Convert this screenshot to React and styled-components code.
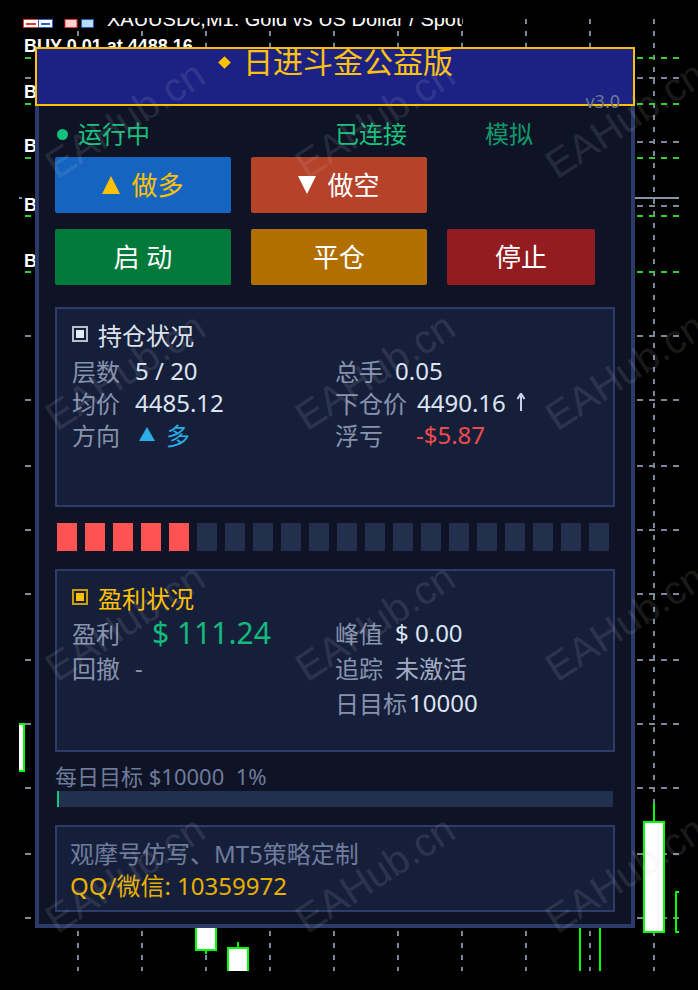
import React from "react";
import styled, { createGlobalStyle, css } from "styled-components";

const TEXT = `"Noto Sans", "Noto Sans CJK SC", sans-serif`;

const GlobalStyle = createGlobalStyle`
  html, body {
    margin: 0;
    padding: 0;
    background: #000;
  }
  body {
    font-family: ${TEXT};
  }
`;

// ---- chart underneath ----

const GRID_X = [78, 142, 206, 270, 334, 398, 462, 526, 590, 654];
const GRID_Y = [78, 142, 206, 336, 400, 466, 530, 594, 660, 724, 788, 854, 918];
const ORDERS = [
  { y: 58, top: 39, text: "BUY 0.01 at 4488.16" },
  { y: 104, top: 85, text: "BUY 0.01 at 4487.40" },
  { y: 158, top: 139, text: "BUY 0.01 at 4486.52" },
  { y: 216, top: 198, text: "BUY 0.01 at 4485.71" },
  { y: 272, top: 254, text: "BUY 0.01 at 4484.90" },
];
const CANDLES = [
  { x: 14, y: 724, w: 10, h: 47 },
  { x: 196, y: 890, w: 20, h: 60, wick: [950, 954] },
  { x: 228, y: 948, w: 20, h: 30, wick: [942, 948] },
  { x: 644, y: 822, w: 20, h: 110, wick: [803, 822] },
];
const GRID = "#7b8999";
const ORDER = "#2fcf2f";
const LIME = "#00ff00";

const ChartSvg = styled.svg`
  position: absolute;
  inset: 0;
  display: block;
`;

function Chart() {
  return (
    <ChartSvg width="698" height="990" viewBox="0 0 698 990">
      <defs>
        <clipPath id="plot">
          <rect x="19" y="18" width="679" height="953" />
        </clipPath>
      </defs>
      <rect width="698" height="990" fill="#000" />
      <g clipPath="url(#plot)">
        {GRID_X.map((x) => (
          <line key={x} x1={x} x2={x} y1="19" y2="972" stroke={GRID} strokeWidth="2" strokeDasharray="5 7" />
        ))}
        {GRID_Y.map((y) => (
          <line key={y} x1="25" x2="679" y1={y} y2={y} stroke={GRID} strokeWidth="2" strokeDasharray="6 6" />
        ))}
        {ORDERS.map((o) => (
          <line key={o.y} x1="25" x2="679" y1={o.y} y2={o.y} stroke={ORDER} strokeWidth="2" strokeDasharray="6 6" />
        ))}
        <line x1="19" x2="679" y1="198" y2="198" stroke="#8595a6" strokeWidth="2" />

        <rect x="0" y="0" width="462" height="30" fill="#000" />
        <g>
          <rect x="23.5" y="19.5" width="15" height="8" fill="#fff" stroke="#d83a3a" />
          <rect x="26" y="23" width="10" height="2" fill="#d83a3a" />
          <rect x="38.5" y="19.5" width="14" height="8" fill="#fff" stroke="#2a64c0" />
          <rect x="41" y="23" width="9" height="2" fill="#2a64c0" />
          <rect x="65" y="19.5" width="12" height="8" fill="#ffd2d2" stroke="#e03434" />
          <rect x="81.5" y="19.5" width="12" height="8" fill="#b8dcff" stroke="#1c5ea6" />
        </g>
        <text x="107" y="26" fill="#fff" fontFamily="Liberation Sans, sans-serif" fontSize="20">
          XAUUSDc,M1: Gold vs US Dollar / Spot
        </text>

        {ORDERS.map((o) => (
          <g key={o.top}>
            <rect x="22" y={o.top - 2} width="178" height="17" fill="#000" />
            <text x="24" y={o.top + 13} fill="#fff" fontFamily="Liberation Sans, sans-serif" fontSize="18" fontWeight="700">
              {o.text}
            </text>
          </g>
        ))}

        {CANDLES.map((c) => (
          <g key={c.x}>
            {c.wick && <line x1={c.x + 10} x2={c.x + 10} y1={c.wick[0]} y2={c.wick[1]} stroke={LIME} strokeWidth="2" />}
            <rect x={c.x} y={c.y} width={c.w} height={c.h} fill="#fff" stroke={LIME} strokeWidth="2" />
          </g>
        ))}
        <line x1="580" x2="580" y1="900" y2="972" stroke={LIME} strokeWidth="2" />
        <line x1="600" x2="600" y1="900" y2="972" stroke={LIME} strokeWidth="2" />
        <path d="M679 892 H676 V932 H679" fill="none" stroke={LIME} strokeWidth="2" />
      </g>
    </ChartSvg>
  );
}

// ---- EA panel ----

const Screen = styled.div`
  position: relative;
  width: 698px;
  height: 990px;
  overflow: hidden;
  background: #000;
`;

const Panel = styled.section`
  position: absolute;
  left: 35px;
  top: 47px;
  width: 600px;
  height: 881px;
  box-sizing: border-box;
  border: 4px solid #2b3a68;
  border-top: 0;
  background: #0e1426;
  display: flex;
  flex-direction: column;
  font-family: ${TEXT};
`;

const Header = styled.header`
  position: relative;
  height: 59px;
  margin: 0 -4px;
  box-sizing: border-box;
  border: 2px solid #ffc000;
  background: #1b2284;
  display: flex;
  justify-content: center;
  align-items: flex-start;
`;

const Title = styled.h1`
  margin: 0 0 0 3px;
  display: flex;
  align-items: center;
  gap: 14px;
  height: 26px;
  font-size: 30px;
  line-height: 26px;
  font-weight: 400;
  color: #ffc20e;
`;

const Diamond = styled.i`
  width: 9px;
  height: 9px;
  background: #ffc000;
  transform: rotate(45deg);
`;

const Version = styled.span`
  position: absolute;
  right: 13px;
  bottom: -6px;
  font-size: 18px;
  line-height: 18px;
  color: #6b7893;
`;

const Body = styled.div`
  display: flex;
  flex-direction: column;
  padding: 0 16px;
`;

const StatusRow = styled.div`
  display: grid;
  grid-template-columns: 280px 150px auto;
  align-items: center;
  height: 30px;
  margin-top: 13px;
  font-size: 24px;
  line-height: 30px;
`;

const Status = styled.span`
  display: flex;
  align-items: center;
  color: ${(p) => p.$color};
`;

const Dot = styled.i`
  width: 11px;
  height: 11px;
  border-radius: 50%;
  background: #12c27a;
  margin: 0 10px 0 2px;
`;

const ButtonRow = styled.div`
  display: flex;
  gap: 20px;
  margin-top: ${(p) => p.$top}px;
`;

const ActionButton = styled.button`
  width: ${(p) => p.$w}px;
  height: 56px;
  padding: 0;
  border: 0;
  border-radius: 2px;
  background: ${(p) => p.$bg};
  color: ${(p) => p.$fg || "#fff"};
  font-family: ${TEXT};
  font-size: 26px;
  line-height: 1;
  white-space: pre;
  display: flex;
  align-items: center;
  justify-content: center;
  gap: 11px;
`;

const Arrow = styled.span`
  width: 0;
  height: 0;
  border-left: ${(p) => p.$half || 9}px solid transparent;
  border-right: ${(p) => p.$half || 9}px solid transparent;
  ${(p) =>
    p.$down
      ? css`
          border-top: ${p.$tall || 18}px solid ${p.$color};
        `
      : css`
          border-bottom: ${p.$tall || 18}px solid ${p.$color};
        `}
`;

const Section = styled.div`
  height: ${(p) => p.$h}px;
  box-sizing: border-box;
  margin-top: ${(p) => p.$top}px;
  padding: ${(p) => p.$pt}px 15px 0;
  border: 2px solid #2d3c69;
  background: #161f3a;
`;

const SectionTitle = styled.div`
  display: flex;
  align-items: center;
  gap: 10px;
  height: 30px;
  font-size: 24px;
  color: ${(p) => p.$color};
`;

const SquareIcon = styled.span`
  width: 16px;
  height: 16px;
  box-sizing: border-box;
  border: 2px solid ${(p) => p.$edge};
  background: ${(p) => p.$fill};
  box-shadow: inset 0 0 0 2px #161f3a;
`;

const StatGrid = styled.div`
  display: grid;
  grid-template-columns: 263px 1fr;
  grid-auto-rows: ${(p) => p.$row}px;
  align-items: center;
  margin-top: ${(p) => p.$gap}px;
  font-size: 24px;
`;

const Stat = styled.div`
  display: flex;
  align-items: center;
  white-space: pre;
`;

const Label = styled.span`
  flex-shrink: 0;
  color: #8792ad;
  ${(p) =>
    p.$w &&
    css`
      width: ${p.$w}px;
    `}
  margin-right: ${(p) => p.$gap || 0}px;
`;

const Value = styled.span`
  display: flex;
  align-items: center;
  gap: ${(p) => p.$inner || 0}px;
  color: ${(p) => p.$color || "#dde4f1"};
  font-size: ${(p) => p.$size || 24}px;
`;

const Blocks = styled.div`
  display: flex;
  gap: 8px;
  margin: 16px 0 0 2px;
`;

const Block = styled.span`
  width: 20px;
  height: 28px;
  background: ${(p) => (p.$on ? "#ff5252" : "#22304e")};
`;

const TargetText = styled.div`
  margin-top: 12px;
  font-size: 22px;
  line-height: 24px;
  color: #6e7b9a;
  white-space: pre;
`;

const Bar = styled.div`
  height: 16px;
  margin: 3px 2px 0;
  background: #22304f;
`;

const BarFill = styled.div`
  height: 100%;
  background: #14c67a;
`;

const Contact = styled.div`
  height: 87px;
  box-sizing: border-box;
  margin-top: 18px;
  padding: 11px 13px 0;
  border: 2px solid #2d3c69;
  background: #161f3a;
  font-size: 24px;
  line-height: 32px;
`;

const ContactLine = styled.div`
  color: ${(p) => p.$color};
`;

const UpArrow = () => (
  <svg width="10" height="20" viewBox="0 0 10 20" style={{ marginLeft: 10 }}>
    <path d="M5 2 V19 M5 1.5 L1.5 7 M5 1.5 L8.5 7" fill="none" stroke="#c9d3e6" strokeWidth="2" />
  </svg>
);

// ---- watermark tiles ----

const Watermarks = styled.div`
  position: absolute;
  left: 0;
  top: -6px;
  display: grid;
  grid-template-columns: repeat(3, 250px);
  grid-auto-rows: 251.5px;
  place-items: center;
  pointer-events: none;
`;

const Mark = styled.span`
  font-family: "Liberation Sans", sans-serif;
  font-size: 40px;
  white-space: nowrap;
  color: rgba(200, 200, 212, 0.15);
  transform: rotate(-33deg);
`;

const levels = Array.from({ length: 20 }, (_, i) => i < 5);

export default function App() {
  return (
    <Screen>
      <GlobalStyle />
      <Chart />
      <Panel>
        <Header>
          <Title>
            <Diamond />
            日进斗金公益版
          </Title>
          <Version>v3.0</Version>
        </Header>
        <Body>
          <StatusRow>
            <Status $color="#16c07a">
              <Dot />
              运行中
            </Status>
            <Status $color="#16c27c">已连接</Status>
            <Status $color="#12996a">模拟</Status>
          </StatusRow>

          <ButtonRow $top={8}>
            <ActionButton $w={176} $bg="#1565c0" $fg="#ffc107">
              <Arrow $color="#ffc107" />
              做多
            </ActionButton>
            <ActionButton $w={176} $bg="#b6422a">
              <Arrow $down $color="#fff" />
              做空
            </ActionButton>
          </ButtonRow>
          <ButtonRow $top={16}>
            <ActionButton $w={176} $bg="#00793b">启 动</ActionButton>
            <ActionButton $w={176} $bg="#b06f00">平仓</ActionButton>
            <ActionButton $w={148} $bg="#931c20">停止</ActionButton>
          </ButtonRow>

          <Section $h={200} $top={22} $pt={10}>
            <SectionTitle $color="#dde2ec">
              <SquareIcon $edge="#b7bfd1" $fill="#e8ebf2" />
              持仓状况
            </SectionTitle>
            <StatGrid $row={32} $gap={5}>
              <Stat>
                <Label $w={63}>层数</Label>
                <Value>5 / 20</Value>
              </Stat>
              <Stat>
                <Label $gap={12}>总手</Label>
                <Value>0.05</Value>
              </Stat>
              <Stat>
                <Label $w={63}>均价</Label>
                <Value>4485.12</Value>
              </Stat>
              <Stat>
                <Label $gap={10}>下仓价</Label>
                <Value>
                  4490.16
                  <UpArrow />
                </Value>
              </Stat>
              <Stat>
                <Label $w={63}>方向</Label>
                <Value $color="#29aee8" $inner={11}>
                  <Arrow $color="#29aee8" $half={8.5} $tall={14} style={{ marginLeft: 4 }} />
                  多
                </Value>
              </Stat>
              <Stat>
                <Label $gap={33}>浮亏</Label>
                <Value $color="#f04b4b">-$5.87</Value>
              </Stat>
            </StatGrid>
          </Section>

          <Blocks>
            {levels.map((on, i) => (
              <Block key={i} $on={on} />
            ))}
          </Blocks>

          <Section $h={183} $top={18} $pt={11}>
            <SectionTitle $color="#ffc000">
              <SquareIcon $edge="#c99e00" $fill="#ffc000" />
              盈利状况
            </SectionTitle>
            <StatGrid $row={35} $gap={3}>
              <Stat>
                <Label $w={80}>盈利</Label>
                <Value $color="#14b97c" $size={30}>$ 111.24</Value>
              </Stat>
              <Stat>
                <Label $gap={12}>峰值</Label>
                <Value>$ 0.00</Value>
              </Stat>
              <Stat>
                <Label $w={63}>回撤</Label>
                <Value $color="#8792ad">-</Value>
              </Stat>
              <Stat>
                <Label $gap={12}>追踪</Label>
                <Value $color="#a3acc2">未激活</Value>
              </Stat>
              <Stat />
              <Stat>
                <Label $gap={2}>日目标</Label>
                <Value>10000</Value>
              </Stat>
            </StatGrid>
          </Section>

          <TargetText>每日目标 $10000  1%</TargetText>
          <Bar>
            <BarFill style={{ width: 2 }} />
          </Bar>

          <Contact>
            <ContactLine $color="#6f7c9c">观摩号仿写、MT5策略定制</ContactLine>
            <ContactLine $color="#e8b000">QQ/微信: 10359972</ContactLine>
          </Contact>
        </Body>
      </Panel>
      <Watermarks>
        {Array.from({ length: 12 }, (_, i) => (
          <Mark key={i}>EAHub.cn</Mark>
        ))}
      </Watermarks>
    </Screen>
  );
}
